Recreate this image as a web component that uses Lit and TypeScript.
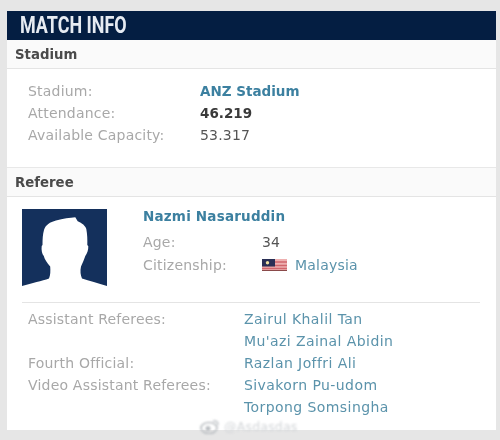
import { LitElement, html, css } from "lit";
import { customElement } from "lit/decorators.js";

@customElement("app-root")
export class AppRoot extends LitElement {
  static styles = css`
    :host { display: block; width: 500px; height: 440px; background: #e6e6e6; position: relative; overflow: hidden;
      font-family: "DejaVu Sans", sans-serif; font-size: 14px; letter-spacing: 0.2px; color: #444; }
    .card { margin: 11px 4px 0 7px; height: 419px; background: #fff; filter: blur(0.5px); }
    .title { height: 29px; background: #041e42; color: #e6ebf2; display: flex; align-items: center; padding-left: 13px;
      font-family: "Roboto", sans-serif; font-weight: 700; font-size: 23px; letter-spacing: 0; }
    .title span { display: inline-block; transform: scaleX(0.78); transform-origin: left center; }
    .sec { height: 28px; background: #fafafa; border-bottom: 1px solid #e4e4e4; display: flex; align-items: center;
      padding-left: 8px; font-weight: 700; font-size: 13.3px; letter-spacing: 0; color: #4a4a4a; }
    .sec.ref { border-top: 1px solid #e8e8e8; }
    .stadium { padding: 11px 21px 0; height: 98px; box-sizing: border-box; display: grid; grid-template-columns: 172px 1fr; grid-auto-rows: 22px; align-items: center; }
    .lab { color: #a8a8a8; }
    .val { color: #555; }
    .strong { font-weight: 700; font-size: 13.5px; letter-spacing: 0; color: #3a3a3a; }
    .link { color: #5b93ab; }
    .link.b { font-weight: 700; font-size: 13.5px; letter-spacing: 0; color: #3c80a0; }
    .name.link.b { letter-spacing: 0.2px; }
    .person { display: flex; height: 105px; box-sizing: border-box; padding: 12px 0 0 15px; }
    .photo { width: 85px; height: 77px; display: block; flex: none; }
    .info { margin-left: 36px; display: grid; grid-template-columns: 119px 1fr; grid-template-rows: 21.5px 23px 23px; align-items: center; align-content: start; }
    .name { grid-column: 1 / 3; align-self: start; line-height: 14px; }
    .cit { display: flex; align-items: center; gap: 8px; }
    .flag { width: 25px; height: 12px; display: block; }
    .others { margin: 0 16px 0 15px; border-top: 1px solid #e4e4e4; padding: 5px 0 0 6px; display: grid; grid-template-columns: 216px 1fr; grid-auto-rows: 22px; align-items: center; }
    .others .link { letter-spacing: 0.42px; }
    .mark { position: absolute; left: 200px; top: 419px; display: flex; align-items: center; gap: 4px; color: #d2d5d8; font-size: 12.5px; filter: blur(1.2px); }
  `;

  render() {
    return html`
      <div class="card">
        <div class="title"><span>MATCH INFO</span></div>
        <div class="sec">Stadium</div>
        <div class="stadium">
          <div class="lab">Stadium:</div><div class="link b">ANZ Stadium</div>
          <div class="lab">Attendance:</div><div class="strong">46.219</div>
          <div class="lab">Available Capacity:</div><div class="val">53.317</div>
        </div>
        <div class="sec ref">Referee</div>
        <div class="person">
          <svg class="photo" viewBox="0 0 85 77">
            <rect width="85" height="77" fill="#14305c"></rect>
            <path fill="#fff" d="M0 77 C10 74 20 72 27 69.5 C28.5 66 28.5 62 28.2 57.5 C25 54 22.5 50 21.8 47 C20 45 19.2 41 19.7 37 L20.5 36 C20.5 30 20.8 25 22 21 C23.5 16 28 13 34 11.5 C41 9.5 48 9 53.3 8.3 L55.7 12.3 C60 14 63.5 17 64.3 20 C65.3 25 65.5 31 65.3 36 L66.3 37.3 C66.5 41 65 45 63.3 47 C62 51 60.5 54 59 57.5 C58 62 58.5 66 60 69.5 C67 72 76 74 85 77Z"></path>
          </svg>
          <div class="info">
            <div class="name link b">Nazmi Nasaruddin</div>
            <div class="lab">Age:</div><div class="val">34</div>
            <div class="lab">Citizenship:</div>
            <div class="cit">
              <svg class="flag" viewBox="0 0 25 12">
                <rect width="25" height="12" fill="#eeb0b0"></rect>
                <path d="M0 3H25M0 6.5H25M0 9.5H25" stroke="#d0666c" stroke-width="1.4"></path>
                <rect x="0" y="0" width="13" height="7.5" fill="#2a2f55"></rect>
                <circle cx="5.5" cy="3.7" r="1.7" fill="#f0e0a0"></circle>
                <rect y="11" width="25" height="1" fill="#8a4a4a"></rect>
              </svg>
              <span class="link">Malaysia</span>
            </div>
          </div>
        </div>
        <div class="others">
          <div class="lab">Assistant Referees:</div><div class="link">Zairul Khalil Tan</div>
          <div></div><div class="link">Mu'azi Zainal Abidin</div>
          <div class="lab">Fourth Official:</div><div class="link">Razlan Joffri Ali</div>
          <div class="lab">Video Assistant Referees:</div><div class="link">Sivakorn Pu-udom</div>
          <div></div><div class="link">Torpong Somsingha</div>
        </div>
      </div>
      <div class="mark">
        <svg width="20" height="15" viewBox="0 0 20 15"><ellipse cx="9" cy="9" rx="8" ry="5.5" fill="none" stroke="#b8bcc0" stroke-width="1.6"></ellipse><circle cx="8" cy="9.5" r="2.5" fill="#b8bcc0"></circle><path d="M13 2Q18 1 18 6" fill="none" stroke="#b8bcc0" stroke-width="1.4"></path></svg>
        <span>@Asdasdas</span>
      </div>
    `;
  }
}
